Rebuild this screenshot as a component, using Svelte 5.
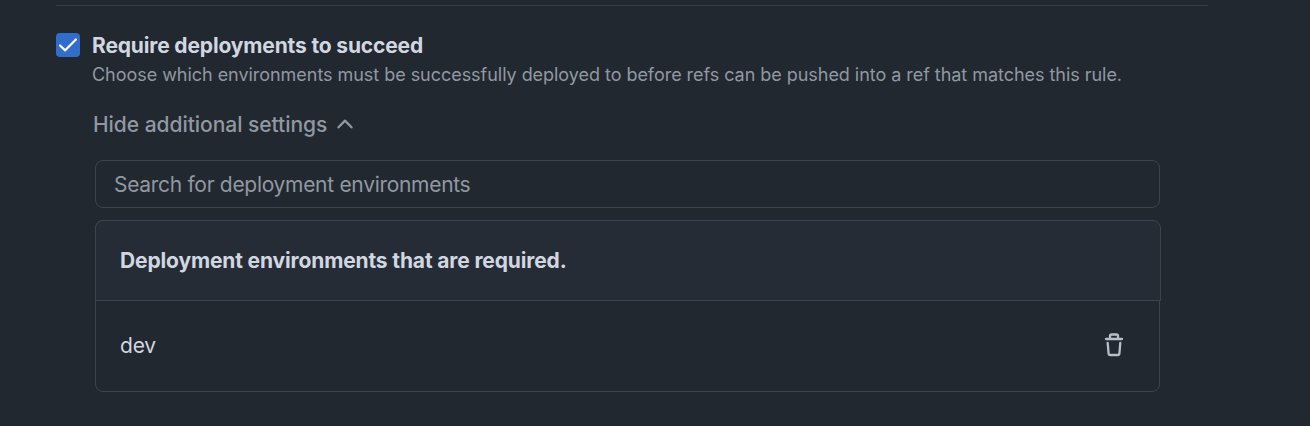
<script>
  let expanded = $state(true);
  let checked = $state(true);
  const environments = ['dev'];
</script>

<main>
  <section class="rule">
    <button class="check" class:off={!checked} role="checkbox" aria-checked={checked} aria-label="Require deployments to succeed" onclick={() => (checked = !checked)}>
      <svg width="24" height="24" viewBox="0 0 24 24"><path d="M4 12.5 9.200 17.300 19.900 6.500" /></svg>
    </button>
    <div class="body">
      <h3><span>Require deployments to succeed</span></h3>
      <p>Choose which environments must be successfully deployed to before refs can be pushed into a ref that matches this rule.</p>
      <button class="toggle" onclick={() => (expanded = !expanded)}>
        <span>Hide additional settings</span>
        <svg width="16" height="10" viewBox="0 0 16 10"><path d="M1.500 8.300 8 1.600l6.500 6.700" /></svg>
      </button>
      {#if expanded}
        <input placeholder="Search for deployment environments" />
        <div class="box">
          <header>Deployment environments that are required.</header>
          {#each environments as name}
            <div class="row">
              <span>{name}</span>
              <button class="trash" aria-label="Delete">
                <svg width="20" height="24" viewBox="0 0 20 24"><path d="M2 6h16M6 6V3.200Q6 1.500 7.700 1.500h4.600Q14 1.500 14 3.200V6M3.700 9.800l.9 10.700q.1 1.500 1.600 1.500h7.600q1.500 0 1.600-1.500l.9-10.700" /></svg>
              </button>
            </div>
          {/each}
        </div>
      {/if}
    </div>
  </section>
</main>

<style>
  :global(body) { background: #212830; }
  main { box-sizing: border-box; height: 426px; padding: 5px 102px 0 56px; overflow: hidden; background: #212830; color: #d1d7e0; font: 21px/30px Inter, sans-serif; }
  button { padding: 0; border: 0; background: none; color: inherit; font: inherit; cursor: pointer; }
  svg { display: block; fill: none; stroke: currentColor; stroke-width: 2.3; stroke-linecap: round; stroke-linejoin: round; }
  .rule { display: flex; border-top: 1px solid #353c44; padding-top: 25px; }
  .check { flex: none; width: 24px; height: 24px; margin: 2px 12px 0 0; border-radius: 4px; background: #316dca; color: #fff; }
  .check.off { background: #444c56; }
  .body { flex: 1; min-width: 0; }
  h3 { margin: 0; font-size: 21px; line-height: 30px; font-weight: 700; letter-spacing: -0.15px; }
  p { margin: 1px 0 0; font-size: 18px; line-height: 26px; color: #9198a1; white-space: nowrap; letter-spacing: -0.04px; }
  .toggle { display: flex; align-items: center; gap: 10px; height: 30px; margin: 22px 0 0 1px; color: #9198a1; font-weight: 500; letter-spacing: -0.04px; }
  .toggle svg { margin-top: -3px; }
  input { display: block; box-sizing: border-box; width: 1065px; height: 48px; margin: 20px 0 0 3px; padding: 0 18px; border: 1px solid #3d444d; border-radius: 8px; outline: 0; background: #212830; color: #d1d7e0; font: inherit; letter-spacing: -0.3px; }
  input::placeholder { color: #9198a1; opacity: 1; }
  .box { box-sizing: border-box; width: 1065px; height: 172px; margin: 12px 0 0 3px; border: 1px solid #3d444d; border-radius: 8px; }
  header { box-sizing: border-box; width: 1066px; height: 81px; margin: -1px; padding: 25px 24px; border: 1px solid #3d444d; border-radius: 8px 8px 0 0; background: #262c36; font-weight: 700; letter-spacing: -0.14px; }
  .row { display: flex; align-items: center; justify-content: space-between; height: 90px; padding: 1px 35px 0 24px; letter-spacing: -0.2px; }
  .trash { margin-top: -2px; color: #b8bec7; }
</style>
